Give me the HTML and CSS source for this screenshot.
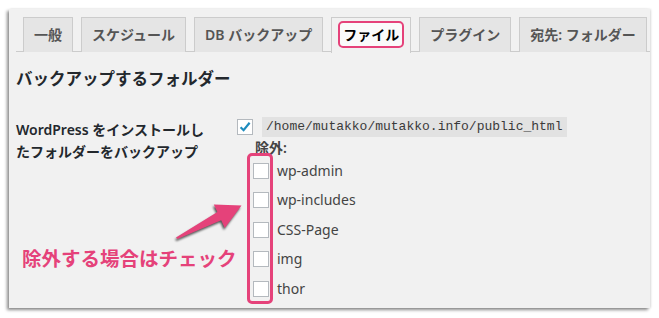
FILE: index.html
```html
<!DOCTYPE html>
<html lang="ja">
<head>
<meta charset="utf-8">
<link rel="stylesheet" href="styles.css">
</head>
<body>
<div class="panel">
  <nav class="tabs">
    <a class="tab">一般</a>
    <a class="tab">スケジュール</a>
    <a class="tab">DB バックアップ</a>
    <a class="tab active"><span class="mark">ファイル</span></a>
    <a class="tab">プラグイン</a>
    <a class="tab">宛先: フォルダー</a>
  </nav>
  <h2 class="title">バックアップするフォルダー</h2>
  <div class="row">
    <div class="label">WordPress をインストールし<br>たフォルダーをバックアップ</div>
    <div class="field">
      <div class="root">
        <span class="cb checked"><svg viewBox="0 0 16 16" width="16" height="16"><path d="M3.6 8.2 L6.6 11.2 L12.6 3.8" fill="none" stroke="#1e8cbe" stroke-width="2.2"/></svg></span>
        <code class="path">/home/mutakko/mutakko.info/public_html</code>
      </div>
      <div class="exclude">除外:</div>
      <ul class="list">
        <li><span class="cb"></span>wp-admin</li>
        <li><span class="cb"></span>wp-includes</li>
        <li><span class="cb"></span>CSS-Page</li>
        <li><span class="cb"></span>img</li>
        <li><span class="cb"></span>thor</li>
      </ul>
    </div>
  </div>
  <div class="hl-box"></div>
  <svg class="arrow" viewBox="160 190 100 70" width="100" height="70">
    <polygon points="176,237.5 217.4,212.1 213.8,204.4 241.5,205.5 224.8,228 221.2,220.3 177.5,239" fill="#e5427a"/>
  </svg>
  <div class="note">除外する場合はチェック</div>
</div>
</body>
</html>
```
FILE: styles.css
```css
html, body {
  margin: 0;
  padding: 0;
  background: #fff;
}
body {
  width: 659px;
  height: 318px;
  overflow: hidden;
  font-family: "Noto Sans", "Noto Sans CJK JP", sans-serif;
  color: #23282d;
}
.panel {
  position: relative;
  margin: 9px 0 0 9px;
  width: 641px;
  height: 299px;
  background: #f1f1f1;
  box-shadow: -2px 2px 3px rgba(0, 0, 0, 0.45), 1px 0 2px rgba(0, 0, 0, 0.12);
  box-sizing: border-box;
  padding-top: 8px;
}
.tabs {
  display: flex;
  gap: 8px;
  margin-left: 7px;
  padding-left: 7px;
  border-bottom: 1px solid #ccc;
  height: 35px;
  box-sizing: border-box;
}
.tab {
  display: block;
  box-sizing: border-box;
  height: 35px;
  padding: 6px 10px 0;
  border: 1px solid #ccc;
  border-bottom: none;
  background: #e5e5e5;
  color: #555;
  font-size: 14px;
  font-weight: 600;
  line-height: 21px;
  white-space: nowrap;
}
.tab.active {
  background: #f1f1f1;
  color: #000;
  height: 36px;
  padding-left: 11px;
  padding-right: 11px;
}
.mark {
  display: inline-block;
  margin: -3px -5px;
  padding: 1px 3px;
  border: 2px solid #e5427a;
  border-radius: 5px;
  background: #fafafa;
  line-height: 21px;
}
.title {
  margin: 15px 0 0 7px;
  font-size: 16.5px;
  line-height: 24px;
  font-weight: 600;
}
.row {
  display: flex;
  margin: 26px 0 0 7px;
}
.label {
  width: 221px;
  padding-top: 2px;
  font-size: 14px;
  font-weight: 600;
  line-height: 22px;
}
.field {
  font-size: 14px;
  color: #444;
}
.root {
  display: flex;
  align-items: center;
  gap: 9px;
  height: 20px;
}
.cb {
  display: inline-block;
  box-sizing: border-box;
  width: 16px;
  height: 16px;
  border: 1px solid #b4b9be;
  background: #fff;
  flex: none;
}
.cb svg {
  display: block;
  margin: -1px;
}
.path {
  font-family: "Liberation Mono", monospace;
  font-size: 13px;
  line-height: 20px;
  padding: 0 5px 0 4px;
  background: #e2e2e2;
  color: #3a3a3a;
}
.exclude {
  margin: 2px 0 0 18px;
  line-height: 17px;
  font-weight: 600;
  color: #444;
}
.list {
  list-style: none;
  margin: 0 0 0 16px;
  padding: 0;
}
.list li {
  display: flex;
  align-items: center;
  gap: 8px;
  height: 29.5px;
  line-height: 20px;
}
.hl-box {
  position: absolute;
  left: 238px;
  top: 144px;
  width: 26px;
  height: 151px;
  box-sizing: border-box;
  border: 3px solid #e5427a;
  border-radius: 5px;
}
.arrow {
  position: absolute;
  left: 151px;
  top: 181px;
  filter: drop-shadow(-1px 2px 1.2px rgba(0, 0, 0, 0.65));
}
.note {
  position: absolute;
  left: 13px;
  top: 238px;
  font-size: 19.5px;
  line-height: 24px;
  font-weight: 700;
  color: #e5427a;
  white-space: nowrap;
}
```
